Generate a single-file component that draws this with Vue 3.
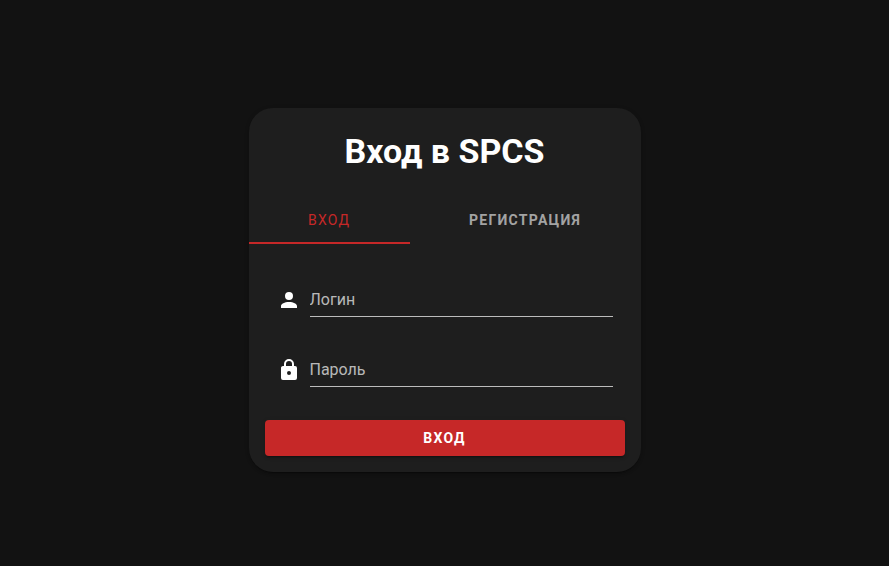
<script setup>
import { ref } from 'vue'

const login = ref('')
const password = ref('')
const tab = ref('login')
</script>

<template>
  <main class="page">
    <section class="card">
      <h1 class="title">Вход в SPCS</h1>
      <div class="tabs" role="tablist">
        <button
          type="button"
          role="tab"
          class="tab"
          :class="{ active: tab === 'login' }"
          :aria-selected="tab === 'login'"
          @click="tab = 'login'"
        >Вход</button>
        <button
          type="button"
          role="tab"
          class="tab"
          :class="{ active: tab === 'register' }"
          :aria-selected="tab === 'register'"
          @click="tab = 'register'"
        >Регистрация</button>
      </div>
      <form class="form" @submit.prevent>
        <div class="row">
          <label class="mark" for="login" aria-label="Логин">
            <svg class="icon" viewBox="0 0 24 24" aria-hidden="true">
              <path d="M12,4A4,4 0 0,1 16,8A4,4 0 0,1 12,12A4,4 0 0,1 8,8A4,4 0 0,1 12,4M12,14C16.42,14 20,15.79 20,18V20H4V18C4,15.79 7.58,14 12,14Z" />
            </svg>
          </label>
          <input id="login" v-model="login" class="field" type="text" placeholder="Логин" />
        </div>
        <div class="row">
          <label class="mark" for="password" aria-label="Пароль">
            <svg class="icon" viewBox="0 0 24 24" aria-hidden="true">
              <path d="M12,17A2,2 0 0,0 14,15C14,13.89 13.1,13 12,13A2,2 0 0,0 10,15A2,2 0 0,0 12,17M18,8A2,2 0 0,1 20,10V20A2,2 0 0,1 18,22H6A2,2 0 0,1 4,20V10C4,8.89 4.9,8 6,8H7V6A5,5 0 0,1 12,1A5,5 0 0,1 17,6V8H18M12,3A3,3 0 0,0 9,6V8H15V6A3,3 0 0,0 12,3Z" />
            </svg>
          </label>
          <input id="password" v-model="password" class="field" type="password" placeholder="Пароль" />
        </div>
        <button type="submit" class="submit">Вход</button>
      </form>
    </section>
  </main>
</template>

<style>
body {
  background: #121212;
}
</style>

<style scoped>
.page {
  box-sizing: border-box;
  min-height: 100vh;
  display: flex;
  align-items: center;
  justify-content: center;
  padding: 16px 16px 2px;
  background: #121212;
  color: #fff;
  font-family: Roboto, "Liberation Sans", sans-serif;
}
.card {
  width: 100%;
  max-width: 392px;
  padding-top: 16px;
  overflow: hidden;
  border-radius: 24px;
  background: #1e1e1e;
  box-shadow: 0 3px 1px -2px rgba(0, 0, 0, 0.2), 0 2px 2px rgba(0, 0, 0, 0.14), 0 1px 5px rgba(0, 0, 0, 0.12);
}
.title {
  margin: 0 0 18px;
  text-align: center;
  font-size: 34px;
  line-height: 54px;
  font-weight: 700;
}
.tabs {
  display: flex;
}
.tab {
  flex: 1 1 auto;
  height: 48px;
  padding: 0 16px;
  border: 0;
  background: none;
  color: rgba(255, 255, 255, 0.6);
  font-family: inherit;
  font-size: 14px;
  font-weight: 700;
  letter-spacing: 0.09em;
  text-transform: uppercase;
  cursor: pointer;
}
.tab.active {
  box-shadow: inset 0 -2px #c62828;
  color: #c62828;
  font-weight: 400;
}
.form {
  padding: 36px 16px 16px;
}
.row {
  display: flex;
  gap: 9px;
  margin-bottom: 33px;
  padding: 0 12px;
}
.row:last-of-type {
  margin-bottom: 33px;
}
.mark {
  padding-top: 8px;
}
.icon {
  display: block;
  width: 24px;
  height: 24px;
  fill: #fff;
}
.field {
  flex: 1;
  min-width: 0;
  box-sizing: border-box;
  height: 37px;
  padding: 3px 0 0;
  border: 0;
  border-bottom: 1px solid rgba(255, 255, 255, 0.7);
  border-radius: 0;
  outline: 0;
  background: none;
  color: #fff;
  font-family: inherit;
  font-size: 16px;
}
.field::placeholder {
  color: rgba(255, 255, 255, 0.7);
  opacity: 1;
}
.submit {
  display: block;
  width: 100%;
  height: 36px;
  border: 0;
  border-radius: 4px;
  background: #c62828;
  color: #fff;
  font-family: inherit;
  font-size: 14px;
  font-weight: 700;
  letter-spacing: 0.09em;
  text-transform: uppercase;
  box-shadow: 0 3px 1px -2px rgba(0, 0, 0, 0.2), 0 2px 2px rgba(0, 0, 0, 0.14), 0 1px 5px rgba(0, 0, 0, 0.12);
  cursor: pointer;
}
</style>
